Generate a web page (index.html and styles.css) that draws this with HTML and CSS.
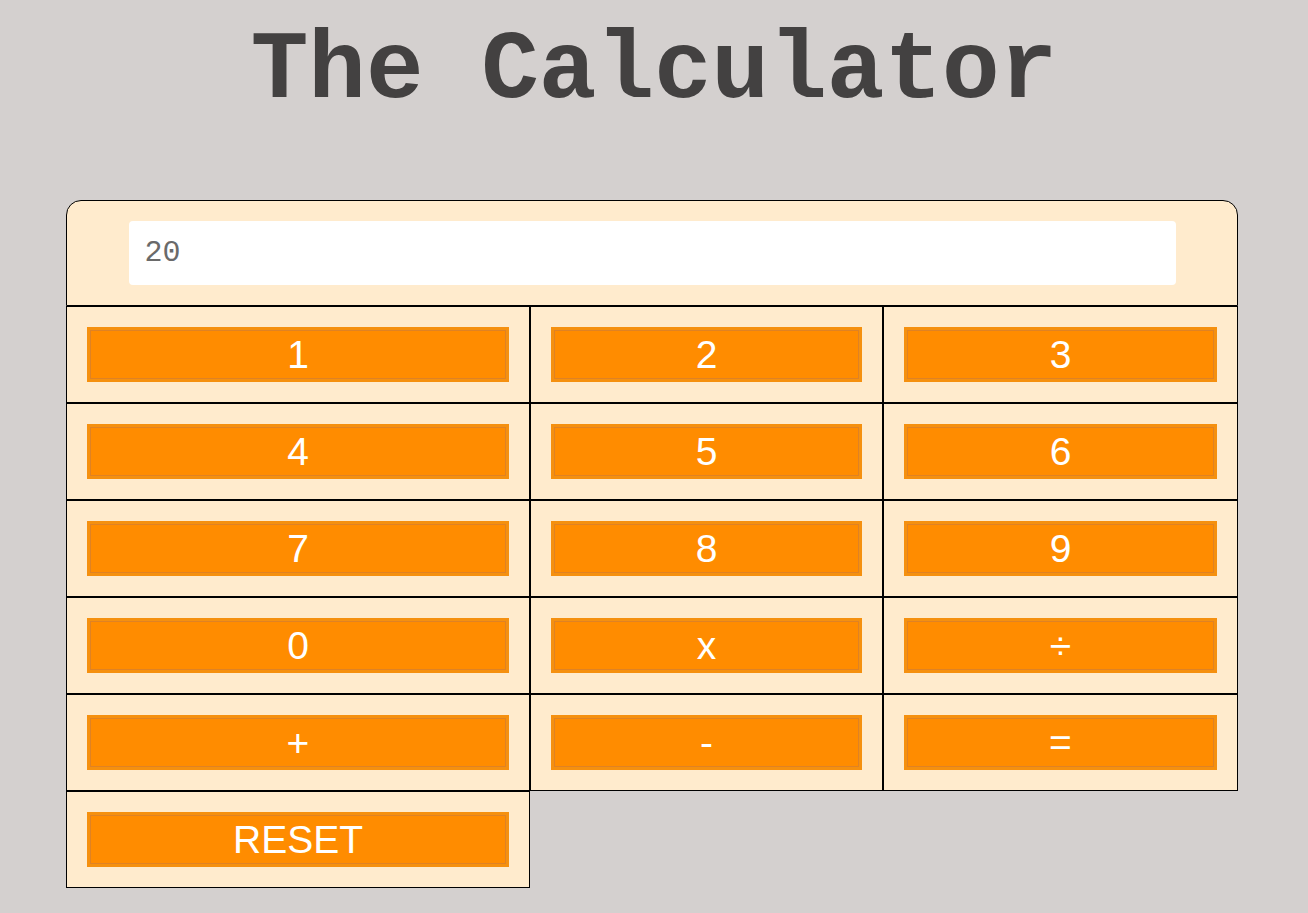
FILE: index.html
```html
<!DOCTYPE html>
<html lang="en">
<head>
<meta charset="utf-8">
<title>The Calculator</title>
<link rel="stylesheet" href="styles.css">
</head>
<body>
<h1 class="title">The Calculator</h1>
<div class="calc">
  <div class="display-cell">
    <input class="display" type="text" value="20" readonly>
  </div>
  <div class="cell"><button class="key">1</button></div>
  <div class="cell"><button class="key">2</button></div>
  <div class="cell"><button class="key">3</button></div>
  <div class="cell"><button class="key">4</button></div>
  <div class="cell"><button class="key">5</button></div>
  <div class="cell"><button class="key">6</button></div>
  <div class="cell"><button class="key">7</button></div>
  <div class="cell"><button class="key">8</button></div>
  <div class="cell"><button class="key">9</button></div>
  <div class="cell"><button class="key">0</button></div>
  <div class="cell"><button class="key">x</button></div>
  <div class="cell"><button class="key">÷</button></div>
  <div class="cell"><button class="key">+</button></div>
  <div class="cell"><button class="key">-</button></div>
  <div class="cell"><button class="key">=</button></div>
  <div class="cell"><button class="key">RESET</button></div>
</div>
</body>
</html>
```
FILE: styles.css
```css
html, body {
  margin: 0;
  padding: 0;
}
body {
  background: #d4d0cf;
  font-family: "Liberation Sans", Arial, sans-serif;
}
.title {
  margin: 0;
  padding-top: 17px;
  height: 200px;
  box-sizing: border-box;
  text-align: center;
  font-family: "Liberation Mono", "Courier New", monospace;
  font-weight: bold;
  font-size: 96px;
  line-height: 110px;
  color: #434141;
}
.calc {
  display: grid;
  grid-template-columns: 464px 353px 355px;
  margin-left: 66px;
  width: 1172px;
}
.display-cell {
  grid-column: 1 / 4;
  background: #ffebcd;
  border: 1px solid #000;
  border-radius: 15px 15px 0 0;
  padding: 20px 0;
  display: flex;
  justify-content: center;
}
.display {
  width: 1047px;
  height: 64px;
  box-sizing: border-box;
  border: none;
  border-radius: 4px;
  background: #fff;
  padding: 0 16px;
  font-family: "Liberation Mono", "Courier New", monospace;
  font-size: 30px;
  color: #6a6a6a;
  outline: none;
}
.cell {
  background: #ffebcd;
  border: 1px solid #000;
  padding: 20px;
}
.key {
  display: block;
  width: 100%;
  height: 55px;
  box-sizing: border-box;
  margin: 0;
  padding: 0;
  background: #ff8c00;
  border: 3px solid #f5900f;
  box-shadow: inset 0 0 0 1px #df8224;
  color: #fff;
  font-family: "Liberation Sans", Arial, sans-serif;
  font-size: 39px;
  line-height: 1;
  cursor: pointer;
}
```
